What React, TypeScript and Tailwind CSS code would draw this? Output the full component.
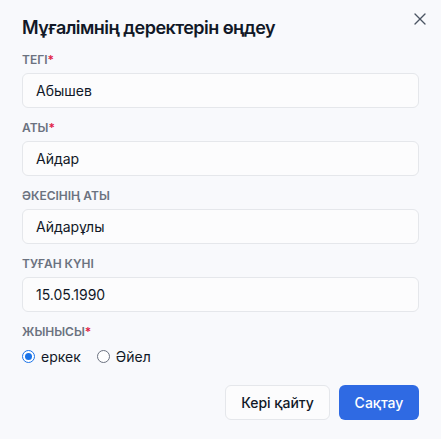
import { X } from 'lucide-react';

const fields = [
    { label: 'Тегі', value: 'Абышев', required: true },
    { label: 'Аты', value: 'Айдар', required: true },
    { label: 'Әкесінің аты', value: 'Айдарұлы', required: false },
    { label: 'Туған күні', value: '15.05.1990', required: false },
];

export default function App() {
    return (
        <div className="h-[439px] w-[441px] bg-[#f8f9fc] text-[#111827]" style={{ fontFamily: 'Inter, "Noto Sans", sans-serif' }}>
            <div className="relative px-[22px] pt-[17px]">
                {/* Close */}
                <button className="absolute right-[11px] top-[9px] text-[#4b5563]">
                    <X className="h-5 w-5" strokeWidth={1.6} />
                </button>
                <h2 className="text-[18px] font-semibold leading-[22px] tracking-[-0.03em]">Мұғалімнің деректерін өңдеу</h2>

                <form className="mt-[13px]">
                    {fields.map((f) => (
                        <div key={f.label} className="mb-[12px]">
                            <label className="mb-[5px] block text-[12px] font-semibold uppercase leading-4 text-[#6b7280]">
                                {f.label}
                                {f.required && <span className="text-[#e11d48]">*</span>}
                            </label>
                            <div className="flex h-[35px] items-center rounded-md border border-[#e5e7eb] bg-[#fcfcfd] px-[13px] text-[14px]">
                                {f.value}
                            </div>
                        </div>
                    ))}

                    {/* Gender */}
                    <div>
                        <label className="mb-[6px] block text-[12px] font-semibold uppercase leading-4 text-[#6b7280]">
                            Жынысы<span className="text-[#e11d48]">*</span>
                        </label>
                        <div className="flex items-center gap-[16px] text-[14px]">
                            <label className="flex items-center gap-[6px]">
                                <span className="flex h-[13px] w-[13px] items-center justify-center rounded-full border-[1.5px] border-[#1a73e8] bg-white">
                                    <span className="h-[7px] w-[7px] rounded-full bg-[#1a73e8]" />
                                </span>
                                еркек
                            </label>
                            <label className="flex items-center gap-[6px]">
                                <span className="h-[13px] w-[13px] rounded-full border border-[#6b7280] bg-white" />
                                Әйел
                            </label>
                        </div>
                    </div>

                    <div className="mt-[18px] flex justify-end gap-[9px]">
                        <button type="button" className="h-[35px] w-[105px] rounded-md border border-[#e5e7eb] bg-[#fcfcfd] text-[14px] font-medium">
                            Кері қайту
                        </button>
                        <button type="button" className="h-[35px] w-[80px] rounded-md bg-[#2f6ae3] text-[14px] font-medium text-white">
                            Сақтау
                        </button>
                    </div>
                </form>
            </div>
        </div>
    );
}
